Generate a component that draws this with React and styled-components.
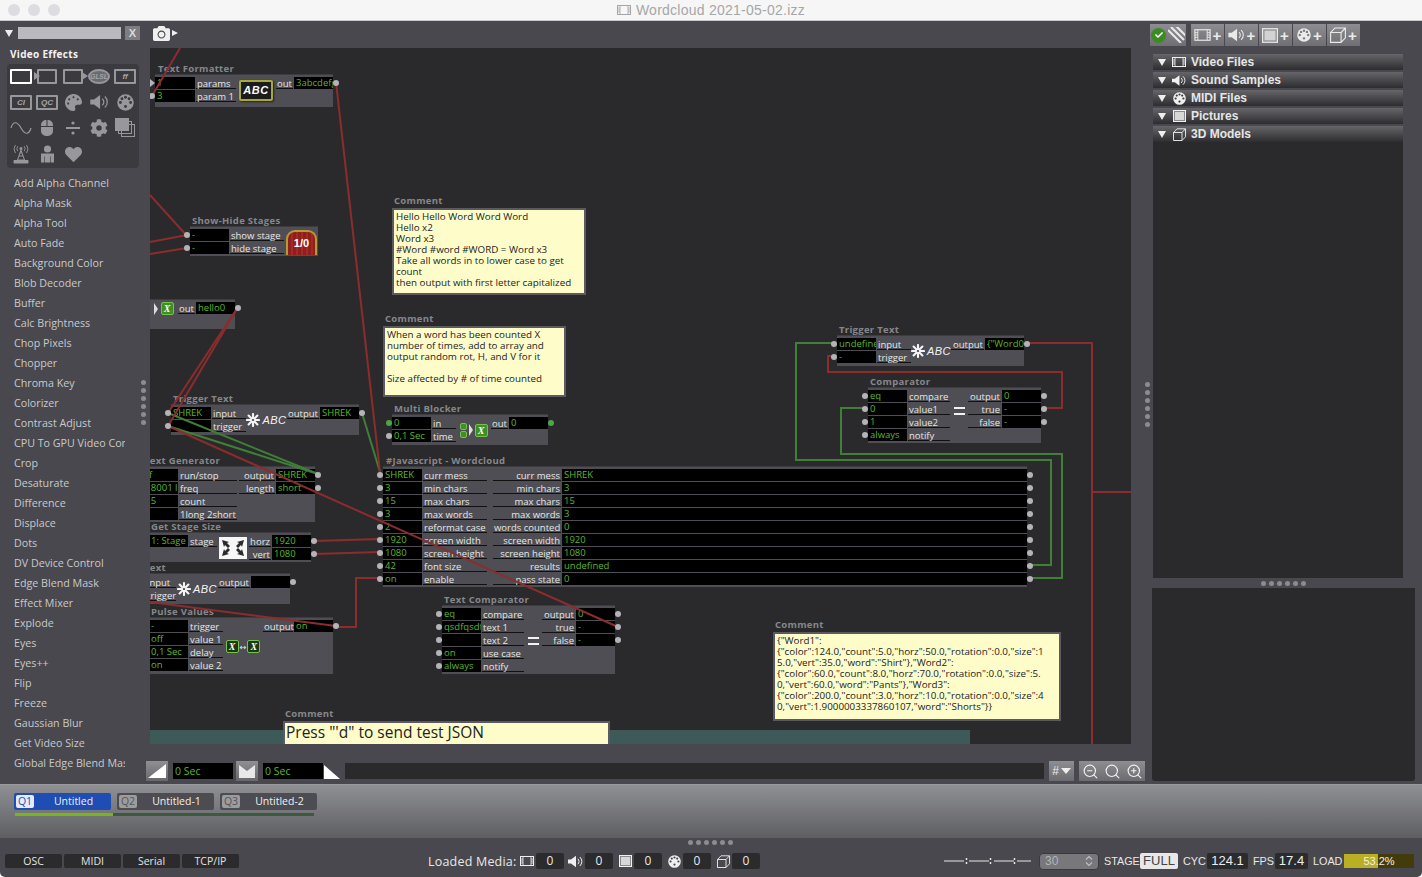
import React from 'react';
import styled, { createGlobalStyle } from 'styled-components';
import { FaPalette, FaMouse, FaCog, FaHeart, FaCamera, FaCheck } from 'react-icons/fa';
import { ZoomIn, ZoomOut, Search } from 'lucide-react';

const UI = '"Open Sans", "DejaVu Sans", sans-serif';

const Global = createGlobalStyle`
  html, body { margin: 0; padding: 0; background: #fff; }
  body { font-family: ${UI}; overflow: hidden; }
  * { box-sizing: border-box; }
`;

const Root = styled.div`
  position: relative;
  width: 1422px;
  height: 877px;
  display: flex;
  flex-direction: column;
  background: #48484e;
  border-radius: 0 0 5px 5px;
  overflow: hidden;
`;

/* ---------- title bar ---------- */
const TitleBar = styled.div`
  position: relative;
  height: 21px;
  flex: none;
  display: flex;
  align-items: center;
  justify-content: center;
  gap: 5px;
  background: #f6f6f6;
  border-bottom: 1px solid #c9c9cc;
  color: #a6a6a8;
  font: 14px "Liberation Sans", sans-serif;
  letter-spacing: 0.25px;
`;
const Lights = styled.div`
  position: absolute;
  left: 8px;
  top: 4px;
  display: flex;
  gap: 8px;
`;
const Light = styled.span`
  width: 12px;
  height: 12px;
  border-radius: 50%;
  background: #dcdce1;
`;

/* ---------- icons ---------- */
const FilmIcon = ({ w = 14, h = 12 }) => (
  <svg width={w} height={h} viewBox="0 0 14 12" fill="none" stroke="currentColor">
    <rect x="0.5" y="1.5" width="13" height="9" />
    <path d="M3 1.5v9M11 1.5v9M.5 4h2.5M.5 6h2.5M.5 8h2.5M11 4h2.5M11 6h2.5M11 8h2.5" strokeWidth="0.8" />
  </svg>
);
const SpeakerIcon = ({ w = 15, h = 13 }) => (
  <svg width={w} height={h} viewBox="0 0 15 13" fill="none" stroke="currentColor">
    <path d="M0 4.5h3L8 .8v11.4L3 8.5H0z" fill="currentColor" stroke="none" />
    <path d="M9.8 3.8a3.6 3.6 0 0 1 0 5.4M11.8 2a6 6 0 0 1 0 9" />
  </svg>
);
const PictureIcon = ({ s = 13 }) => (
  <svg width={s} height={s - 1} viewBox="0 0 13 12">
    <rect x="0.5" y="0.5" width="12" height="11" fill="#8a8a8e" stroke="currentColor" />
    <rect x="2" y="2" width="9" height="8" fill="currentColor" opacity="0.75" />
  </svg>
);
const MidiIcon = ({ s = 13, hole = '#48484e' }) => (
  <svg width={s} height={s} viewBox="0 0 13 13">
    <circle cx="6.5" cy="6.5" r="6.3" fill="currentColor" />
    {[[2.6, 6.5], [3.8, 3.6], [6.5, 2.5], [9.2, 3.6], [10.4, 6.5], [6.5, 9.6]].map(([cx, cy]) => (
      <circle key={cx + '-' + cy} cx={cx} cy={cy} r="1.1" fill={hole} />
    ))}
  </svg>
);
const CubeIcon = ({ s = 13 }) => (
  <svg width={s} height={s} viewBox="0 0 13 13" fill="none" stroke="currentColor" strokeWidth="0.9">
    <path d="M.5 4.5h8.5v8H.5zM.5 4.5L4 .8h8.5L9 4.5M12.5.8v8L9 12.5" />
  </svg>
);
const SparkIcon = () => (
  <svg width="14" height="14" viewBox="-7 -7 14 14" stroke="#f4f4f4" strokeWidth="2.1" strokeLinecap="round">
    <path d="M0-2V-6M0 2V6M-2 0H-6M2 0H6M-1.5-1.5L-4.4-4.4M1.5 1.5L4.4 4.4M-1.5 1.5L-4.4 4.4M1.5-1.5L4.4-4.4" />
  </svg>
);
const TowerIcon = () => (
  <svg width="18" height="19" viewBox="0 0 18 19" fill="none" stroke="currentColor">
    <path d="M9 5L5.5 15h7zM6.8 11h4.4M7.8 8h2.4" />
    <path d="M2 18h14v-2.5H2z" fill="currentColor" />
    <circle cx="9" cy="3.5" r="1.5" fill="currentColor" stroke="none" />
    <path d="M5.8 1.2a4 4 0 0 0 0 5M12.2 1.2a4 4 0 0 1 0 5M3.4 0a7 7 0 0 0 0 8M14.6 0a7 7 0 0 1 0 8" strokeWidth="0.9" />
  </svg>
);

/* ---------- left column ---------- */
const Workspace = styled.div`
  position: relative;
  flex: 1;
  display: flex;
  min-height: 0;
`;
const Sidebar = styled.aside`
  width: 150px;
  flex: none;
  overflow: hidden;
`;
const SearchRow = styled.div`
  display: flex;
  align-items: center;
  height: 21px;
  padding: 3px 0 0 5px;
`;
const Disclosure = styled.span`
  width: 0;
  height: 0;
  border-left: 4px solid transparent;
  border-right: 4px solid transparent;
  border-top: 7px solid ${p => p.$color || '#eee'};
  flex: none;
`;
const SearchBox = styled.div`
  width: 103px;
  height: 12px;
  margin-left: 5px;
  background: #b9b9bf;
`;
const ClearButton = styled.div`
  width: 15px;
  height: 14px;
  margin-left: 4px;
  background: #7d7d82;
  color: #d9d9dc;
  font: bold 11px/14px "Liberation Sans", sans-serif;
  text-align: center;
`;
const SectionTitle = styled.div`
  margin: 5px 0 0 10px;
  height: 14px;
  color: #f2f2f2;
  font: bold 10px/14px ${UI};
  letter-spacing: 0.3px;
`;
const Palette = styled.div`
  width: 132px;
  height: 104px;
  margin: 3px 0 0 7px;
  padding: 2px 1px 0;
  display: grid;
  grid-template-columns: repeat(5, 26px);
  grid-auto-rows: 26px;
  justify-items: center;
  align-items: start;
  background: #3a3a3f;
  border-radius: 4px;
  color: #98989c;
`;
const PaletteCell = styled.div`
  height: 20px;
  display: flex;
  align-items: center;
  justify-content: center;
`;
const FrameGlyph = styled.div`
  position: relative;
  width: ${p => (p.$wide ? 22 : 20)}px;
  height: 15px;
  border: 2px solid ${p => (p.$active ? '#fff' : '#98989c')};
  border-radius: ${p => (p.$oval ? '50%' : '1px')};
  background: ${p => (p.$oval ? '#6c6c70' : 'transparent')};
  color: #a5a5a9;
  font: italic bold ${p => (p.$oval ? 6.5 : 8)}px/11px "Liberation Sans", sans-serif;
  text-align: center;
  white-space: nowrap;
`;
const FrameArrow = styled.span`
  position: absolute;
  top: 1px;
  ${p => (p.$right ? 'right: -7px;' : 'left: -5px;')}
  width: 0;
  height: 0;
  border-top: 4px solid transparent;
  border-bottom: 4px solid transparent;
  border-left: 6px solid #98989c;
`;
const EffectList = styled.ul`
  list-style: none;
  margin: 5px 0 0;
  padding: 0;
  width: 125px;
  overflow: hidden;
`;
const EffectItem = styled.li`
  height: 20px;
  padding-left: 14px;
  color: #c8c8ca;
  font-size: 10.7px;
  line-height: 20px;
  white-space: nowrap;
  overflow: hidden;
`;

/* ---------- center column ---------- */
const Center = styled.main`
  width: 981px;
  flex: none;
  display: flex;
  flex-direction: column;
`;
const CanvasBar = styled.div`
  height: 27px;
  display: flex;
  align-items: center;
  gap: 2px;
  padding: 0 0 3px 3px;
  color: #f0f0f0;
`;
const SmallArrow = styled.span`
  width: 0;
  height: 0;
  border-top: 3px solid transparent;
  border-bottom: 3px solid transparent;
  border-left: 6px solid #eee;
`;
const SmallDown = styled.span`
  width: 0;
  height: 0;
  border-left: 5px solid transparent;
  border-right: 5px solid transparent;
  border-top: 6px solid #eee;
`;
const Canvas = styled.section`
  position: relative;
  height: 696px;
  background: #2a2a2d;
  overflow: hidden;
`;
const ScrubStrip = styled.div`
  position: absolute;
  left: 0;
  bottom: 0;
  width: 820px;
  height: 14px;
  background: #3d5a59;
`;
const Wires = styled.svg`
  position: absolute;
  inset: 0;
  z-index: 2;
  pointer-events: none;
`;

const NodeFrame = styled.div`
  position: absolute;
  left: ${p => p.$x - 150}px;
  top: ${p => p.$y - 60}px;
`;
const NodeTitle = styled.div`
  height: ${p => p.$h || 12}px;
  padding-left: ${p => p.$indent}px;
  color: #87878b;
  font: bold 9.5px/12px ${UI};
  letter-spacing: 0.3px;
  white-space: nowrap;
`;
const NodeBody = styled.div`
  display: grid;
  grid-template-columns: ${p => p.$cols.map(c => c + 'px').join(' ')};
  grid-auto-rows: 13px;
  padding: 2px 0 ${p => p.$pad}px;
  background: #4e4e54;
  border-top: 1px solid #3c3c41;
  margin-top: -1px;
`;
const FieldCell = styled.div`
  position: relative;
  grid-column: ${p => p.$col};
  grid-row: ${p => p.$row};
  height: 12px;
`;
const FieldText = styled.div`
  height: 12px;
  padding-left: 2px;
  background: #000;
  color: #5db52c;
  font-size: 9.5px;
  line-height: 11px;
  white-space: nowrap;
  overflow: hidden;
`;
const FieldLabel = styled.div`
  grid-column: ${p => p.$col};
  grid-row: ${p => p.$row};
  height: 12px;
  margin: 0 1px;
  padding: 0 1px;
  color: #e6e6e6;
  border-bottom: 1px solid #111;
  font-size: 9.5px;
  line-height: 14px;
  text-align: ${p => (p.$right ? 'right' : 'left')};
  white-space: nowrap;
  overflow: visible;
`;
const Port = styled.span`
  position: absolute;
  z-index: 3;
  top: 3px;
  ${p => (p.$side === 'out' ? 'right: -6px;' : 'left: -6px;')}
  width: 6px;
  height: 6px;
  border-radius: 50%;
  background: ${p => (p.$kind === 'on' ? '#49a845' : '#b4b4b8')};
`;
const ArrowPort = styled.span`
  position: absolute;
  z-index: 3;
  top: 2px;
  left: -5px;
  width: 0;
  height: 0;
  border-top: 4px solid transparent;
  border-bottom: 4px solid transparent;
  border-left: 5px solid #b4b4b8;
`;
const IconCell = styled.div`
  grid-column: 3;
  grid-row: 1 / span ${p => p.$span};
  display: flex;
  align-items: ${p => p.$align || 'center'};
  justify-content: center;
`;

const Node = ({ x, y, title, indent = 2, cols, inputs = [], outputs = [], pad = 1, rows, align, children }) => {
  const span = rows || Math.max(inputs.length, outputs.length);
  return (
    <NodeFrame $x={x} $y={y}>
      <NodeTitle $indent={indent}>{title}</NodeTitle>
      <NodeBody $cols={cols} $pad={pad}>
        {inputs.map(([value, label, kind], i) => (
          <React.Fragment key={label}>
            <FieldCell $col={1} $row={i + 1}>
              {kind === 'arrow' ? <ArrowPort /> : <Port $kind={kind} />}
              <FieldText>{value}</FieldText>
            </FieldCell>
            <FieldLabel $col={2} $row={i + 1}>{label}</FieldLabel>
          </React.Fragment>
        ))}
        <IconCell $span={span} $align={align}>{children}</IconCell>
        {outputs.map(([label, value, kind], i) => (
          <React.Fragment key={label}>
            <FieldLabel $col={4} $row={i + 1} $right>{label}</FieldLabel>
            <FieldCell $col={5} $row={i + 1}>
              <FieldText>{value}</FieldText>
              <Port $side="out" $kind={kind} />
            </FieldCell>
          </React.Fragment>
        ))}
      </NodeBody>
    </NodeFrame>
  );
};

const AbcPlate = styled.div`
  width: 34px;
  height: 21px;
  margin-top: 1px;
  background: #1c1c1c;
  border: 2px solid #a7a83a;
  border-radius: 2px;
  box-shadow: 1px 1px 2px #222;
  color: #fff;
  font: italic bold 11px/17px "Liberation Sans", sans-serif;
  letter-spacing: 0.5px;
  text-align: center;
`;
const StagePlate = styled.div`
  width: 31px;
  height: 25px;
  border: 2px solid #b39a34;
  border-bottom: 0;
  border-radius: 9px 9px 0 0;
  background: repeating-linear-gradient(90deg, #8e1f1c 0 3px, #a52a24 3px 5px);
  color: #fff;
  font: bold 11px/23px "Liberation Sans", sans-serif;
  text-align: center;
`;
const ActorX = styled.span`
  display: inline-block;
  flex: none;
  width: ${p => p.$size}px;
  height: ${p => p.$size}px;
  background: ${p => (p.$dark ? '#1c3a12' : '#3f8f22')};
  border: 1px solid #79c04e;
  border-radius: 2px;
  color: #fff;
  font: italic bold ${p => p.$size - 3}px/${p => p.$size - 2}px "Liberation Serif", serif;
  text-align: center;
`;
const XRow = styled.div`
  display: flex;
  align-items: center;
  gap: ${p => p.$gap || 2}px;
  color: #e8e8e8;
  font-size: 8px;
`;
const XStack = styled.div`
  display: flex;
  flex-direction: column;
  gap: 1px;
`;
const Wedge = styled.span`
  width: 0;
  height: 0;
  border-top: 6px solid transparent;
  border-bottom: 6px solid transparent;
  border-left: 4px solid #ddd;
`;
const TriggerMark = styled.div`
  display: flex;
  align-items: center;
  gap: 2px;
  color: #f4f4f4;
  font: italic 11px "Liberation Sans", sans-serif;
  letter-spacing: 0.5px;
`;
const EqualsMark = styled.div`
  width: 11px;
  height: 8px;
  margin-top: ${p => p.$top}px;
  border-top: 2px solid #f2f2f2;
  border-bottom: 2px solid #f2f2f2;
`;
const StageSizeIcon = () => (
  <svg width="28" height="22" viewBox="0 0 28 22">
    <rect width="28" height="22" fill="#f6f6f6" />
    <g fill="#2a2a2d">
      <path d="M3 3l7 2-2 1 3 3-2 2-3-3-1 2zM25 3l-7 2 2 1-3 3 2 2 3-3 1 2zM3 19l7-2-2-1 3-3-2-2-3 3-1-2zM25 19l-7-2 2-1-3-3 2-2 3 3 1-2z" />
    </g>
  </svg>
);

const CommentFrame = styled.div`
  position: absolute;
  z-index: 1;
  left: ${p => p.$x - 150}px;
  top: ${p => p.$y - 61}px;
  width: ${p => p.$w}px;
`;
const CommentBox = styled.div`
  height: ${p => p.$h}px;
  padding: ${p => (p.$large ? '0 1px' : '1px 2px 0')};
  background: #fefdca;
  border: 2px solid #5a5a60;
  border-bottom-width: ${p => (p.$large ? 0 : 2)}px;
  color: #222;
  font-size: ${p => (p.$large ? 15.5 : 9.8)}px;
  line-height: ${p => (p.$large ? '19px' : '11px')};
  white-space: pre;
  overflow: hidden;
`;
const Comment = ({ x, y, w, h, large, children }) => (
  <CommentFrame $x={x} $y={y} $w={w}>
    <NodeTitle $indent={2} $h={13}>Comment</NodeTitle>
    <CommentBox $h={h} $large={large}>{children}</CommentBox>
  </CommentFrame>
);

const Transport = styled.div`
  height: 40px;
  margin: 0 -14px 0 -4px;
  padding-top: 17px;
  display: flex;
  align-items: flex-start;
  gap: 5px;
`;
const FadeButton = styled.div`
  width: 22px;
  height: 20px;
  background: linear-gradient(#909094, #68686c);
  display: flex;
  align-items: center;
  justify-content: center;
`;
const TimeField = styled.div`
  width: 60px;
  height: 16px;
  margin: 2px -2px 0 0;
  padding-left: 2px;
  background: #000;
  color: #5db52c;
  font-size: 10.5px;
  line-height: 16px;
`;
const FadeOutMark = styled.svg`
  flex: none;
  margin: 2px 0 0 -2px;
`;
const Timeline = styled.div`
  flex: 1;
  height: 16px;
  margin-top: 2px;
  background: #2a2a2d;
`;
const GridButton = styled.div`
  width: 25px;
  height: 20px;
  display: flex;
  align-items: center;
  justify-content: center;
  gap: 2px;
  background: linear-gradient(#8e8e92, #6c6c70);
  color: #eee;
  font: 12px "Liberation Sans", sans-serif;
`;
const ZoomGroup = styled.div`
  width: 66px;
  height: 20px;
  display: flex;
  align-items: center;
  justify-content: space-around;
  background: linear-gradient(#8e8e92, #6c6c70);
  color: #f2f2f2;
`;

/* ---------- right column ---------- */
const MediaColumn = styled.aside`
  width: 291px;
  flex: none;
  padding: 3px 7px 3px 22px;
  display: flex;
  flex-direction: column;
`;
const MediaToolbar = styled.div`
  height: 22px;
  margin-left: -3px;
  display: flex;
  gap: 1px;
  flex: none;
`;
const MediaButton = styled.div`
  width: ${p => p.$w || 33}px;
  margin-right: ${p => p.$mr || 0}px;
  display: flex;
  align-items: center;
  justify-content: center;
  gap: 2px;
  background: linear-gradient(#8e8e92, #6f6f73);
  color: #eaeaea;
  font: bold 15px/1 "Liberation Sans", sans-serif;
`;
const CheckBadge = styled.span`
  width: 15px;
  height: 15px;
  border-radius: 50%;
  background: #3d8a24;
  color: #fff;
  display: flex;
  align-items: center;
  justify-content: center;
`;
const MediaPanel = styled.div`
  width: 250px;
  height: 524px;
  margin-top: 8px;
  display: flex;
  flex-direction: column;
  gap: 2px;
  flex: none;
`;
const MediaHeader = styled.div`
  height: 16px;
  flex: none;
  display: flex;
  align-items: center;
  padding-left: 5px;
  background: linear-gradient(#66666a, #2d2d30);
  color: #e6e6e6;
  font: bold 12px/16px "Liberation Sans", sans-serif;
`;
const HeaderIcon = styled.span`
  width: 14px;
  margin: 0 5px 0 6px;
  display: flex;
  justify-content: center;
  color: #f0f0f0;
`;
const MediaWell = styled.div`
  flex: 1;
  background: #2a2a2d;
  margin-top: -2px;
`;
const PreviewWell = styled.div`
  width: 263px;
  height: 193px;
  margin: 10px 0 0 -1px;
  flex: none;
  background: #2a2a2d;
  border-radius: 0 0 3px 3px;
`;

const Dots = styled.div`
  position: absolute;
  z-index: 4;
  display: flex;
  flex-direction: ${p => (p.$vertical ? 'column' : 'row')};
  gap: 3px;
  left: ${p => p.$x}px;
  top: ${p => p.$y}px;
  span {
    width: 5px;
    height: 5px;
    border-radius: 50%;
    background: #8b8b90;
  }
`;
const Grip = ({ x, y, vertical }) => (
  <Dots $x={x} $y={y} $vertical={vertical}>
    {[0, 1, 2, 3, 4, 5].map(i => <span key={i} />)}
  </Dots>
);

/* ---------- cue bar ---------- */
const CueBar = styled.div`
  height: 54px;
  flex: none;
  padding: 8px 0 0 14px;
  background: linear-gradient(#8f9094, #5d5d62);
  border-top: 1px solid #9a9a9e;
`;
const CueTabs = styled.div`
  display: flex;
  gap: 6px;
`;
const CueTab = styled.div`
  position: relative;
  width: 97px;
  height: 17px;
  padding-left: 22px;
  border-radius: 2px;
  background: ${p => (p.$active ? '#1e4db4' : '#4c4c52')};
  color: #f0f0f0;
  font-size: 10.5px;
  line-height: 16px;
  text-align: center;
`;
const CueBadge = styled.span`
  position: absolute;
  left: 2px;
  top: 2px;
  width: 18px;
  height: 13px;
  border-radius: 2px;
  background: ${p => (p.$active ? '#e6ebf6' : '#9c9c9f')};
  color: ${p => (p.$active ? '#1e4db4' : '#555')};
  font-size: 10.5px;
  line-height: 13px;
  text-align: center;
`;
const CueProgress = styled.div`
  width: 299px;
  height: 3px;
  margin: 3px 0 0 1px;
  background: #3b5a3e;
`;
const CueFill = styled.div`
  width: 98px;
  height: 3px;
  background: #74b816;
`;

/* ---------- status bar ---------- */
const StatusBar = styled.footer`
  height: 39px;
  flex: none;
  padding: 15px 0 0 5px;
  display: flex;
  align-items: flex-start;
  color: #e8e8e8;
  font-size: 11px;
`;
const ConnectionButtons = styled.div`
  display: flex;
  gap: 2px;
  margin-top: 1px;
`;
const ConnectionButton = styled.div`
  width: 57px;
  height: 14px;
  border-radius: 2px;
  background: #2b2b2e;
  color: #e4e4e4;
  font-size: 10.5px;
  line-height: 14px;
  text-align: center;
`;
const LoadedMedia = styled.div`
  margin-left: 189px;
  height: 16px;
  display: flex;
  align-items: center;
  font-size: 12.5px;
`;
const LoadedLabel = styled.span`
  width: 88px;
  white-space: nowrap;
  letter-spacing: 0.2px;
`;
const LoadedIcon = styled.span`
  display: flex;
  width: ${p => p.$w}px;
  margin-left: ${p => p.$ml}px;
  color: #f0f0f0;
`;
const Count = styled.div`
  width: 28px;
  height: 16px;
  border-radius: 2px;
  background: #2b2b2e;
  font-size: 12px;
  line-height: 16px;
  text-align: center;
`;
const RightStatus = styled.div`
  margin-left: 184px;
  height: 16px;
  display: flex;
  align-items: center;
  font-family: "Liberation Sans", sans-serif;
  font-size: 11px;
`;
const Stepper = styled.div`
  width: 60px;
  height: 17px;
  margin: 0 5px 0 8px;
  padding: 0 5px;
  display: flex;
  align-items: center;
  justify-content: space-between;
  border-radius: 4px;
  border: 1px solid #3a3a3e;
  background: #77777c;
  color: #b4b4b7;
  font-size: 12px;
`;
const StatLabel = styled.span`
  width: ${p => p.$w}px;
  white-space: nowrap;
  font-size: 10.8px;
`;
const StatValue = styled.div`
  width: ${p => p.$w}px;
  height: 16px;
  margin: 0 5px 0 2px;
  border-radius: 2px;
  background: ${p => (p.$light ? '#e8e8e8' : '#2b2b2e')};
  color: ${p => (p.$light ? '#444' : '#eee')};
  font-size: 13px;
  line-height: 16px;
  text-align: center;
`;
const LoadMeter = styled.div`
  position: relative;
  width: 70px;
  height: 14px;
  margin-left: 2px;
  background: #423c0d;
  color: #f2f2e0;
  font-size: 11px;
  line-height: 14px;
  text-align: center;
`;
const LoadFill = styled.div`
  position: absolute;
  inset: 0 auto 0 0;
  background: #b9ae24;
`;
const LoadText = styled.span`
  position: relative;
`;

/* ---------- data ---------- */
const effects = [
  'Add Alpha Channel', 'Alpha Mask', 'Alpha Tool', 'Auto Fade', 'Background Color', 'Blob Decoder', 'Buffer',
  'Calc Brightness', 'Chop Pixels', 'Chopper', 'Chroma Key', 'Colorizer', 'Contrast Adjust', 'CPU To GPU Video Con',
  'Crop', 'Desaturate', 'Difference', 'Displace', 'Dots', 'DV Device Control', 'Edge Blend Mask', 'Effect Mixer',
  'Explode', 'Eyes', 'Eyes++', 'Flip', 'Freeze', 'Gaussian Blur', 'Get Video Size', 'Global Edge Blend Mask',
];

const redWires = [
  'M180 48L152 96', 'M336 82L380 472', 'M150 195L187 236', 'M150 242L187 235', 'M150 254L187 248',
  'M238 307L168 413', 'M238 307L168 426', 'M168 426L618 627', 'M150 602L336 626',
  'M314 541L380 539', 'M314 554L380 552', 'M336 627H356V578H380',
  'M1027 343H1092V744', 'M1092 492H1131', 'M1044 408H1062V372H828V356H834',
];
const greenWires = [
  'M834 343H796V460H1051V565H1027', 'M865 408H841V454H1062V578H1027',
  'M168 413L318 474', 'M168 426L318 474', 'M362 413L380 472',
];

const media = [
  ['Video Files', <FilmIcon key="f" />], ['Sound Samples', <SpeakerIcon key="s" />], ['MIDI Files', <MidiIcon key="m" hole="#3c3c40" />],
  ['Pictures', <PictureIcon key="p" />], ['3D Models', <CubeIcon key="c" />],
];

const App = () => (
  <Root>
    <Global />
    <TitleBar>
      <Lights><Light /><Light /><Light /></Lights>
      <FilmIcon />
      Wordcloud 2021-05-02.izz
    </TitleBar>

    <Workspace>
      <Sidebar>
        <SearchRow>
          <Disclosure />
          <SearchBox />
          <ClearButton>X</ClearButton>
        </SearchRow>
        <SectionTitle>Video Effects</SectionTitle>
        <Palette>
          <PaletteCell><FrameGlyph $wide $active /></PaletteCell>
          <PaletteCell><FrameGlyph><FrameArrow /></FrameGlyph></PaletteCell>
          <PaletteCell><FrameGlyph><FrameArrow $right /></FrameGlyph></PaletteCell>
          <PaletteCell><FrameGlyph $wide $oval>GLSL</FrameGlyph></PaletteCell>
          <PaletteCell><FrameGlyph $wide>ff</FrameGlyph></PaletteCell>
          <PaletteCell><FrameGlyph $wide>CI</FrameGlyph></PaletteCell>
          <PaletteCell><FrameGlyph $wide>QC</FrameGlyph></PaletteCell>
          <PaletteCell><FaPalette size={17} /></PaletteCell>
          <PaletteCell><SpeakerIcon w={19} h={16} /></PaletteCell>
          <PaletteCell><MidiIcon s={17} hole="#3a3a3f" /></PaletteCell>
          <PaletteCell>
            <svg width="22" height="16" viewBox="0 0 22 16" fill="none" stroke="currentColor" strokeWidth="1.2">
              <path d="M1 8C3 1 7 1 11 8s8 7 10 0" />
            </svg>
          </PaletteCell>
          <PaletteCell><FaMouse size={16} /></PaletteCell>
          <PaletteCell>
            <svg width="14" height="14" viewBox="0 0 14 14" fill="currentColor">
              <circle cx="7" cy="2" r="1.6" /><rect y="6" width="14" height="2" /><circle cx="7" cy="12" r="1.6" />
            </svg>
          </PaletteCell>
          <PaletteCell><FaCog size={18} /></PaletteCell>
          <PaletteCell>
            <svg width="20" height="20" viewBox="0 0 20 20" fill="none" stroke="currentColor">
              <rect x="6.5" y="6.5" width="13" height="12" />
              <rect x="3.5" y="3.5" width="13" height="12" />
              <rect x="0.5" y="0.5" width="13" height="12" fill="currentColor" />
            </svg>
          </PaletteCell>
          <PaletteCell><TowerIcon /></PaletteCell>
          <PaletteCell>
            <svg width="15" height="18" viewBox="0 0 15 18" fill="currentColor">
              <circle cx="7.5" cy="4" r="3.6" /><path d="M1 8.5h13v9h-3v-6h-.6v6H4.6v-6H4v6H1z" />
            </svg>
          </PaletteCell>
          <PaletteCell><FaHeart size={17} /></PaletteCell>
        </Palette>
        <EffectList>
          {effects.map(name => <EffectItem key={name}>{name}</EffectItem>)}
        </EffectList>
      </Sidebar>

      <Center>
        <CanvasBar>
          <FaCamera size={17} />
          <SmallArrow />
        </CanvasBar>
        <Canvas>
          <ScrubStrip />

          <Node x={155} y={75} title="Text Formatter" indent={3} cols={[40, 42, 38, 19, 39]}
            inputs={[['1', 'params', 'arrow'], ['3', 'param 1']]} outputs={[['out', '3abcdefg']]} rows={2} pad={4}>
            <AbcPlate>ABC</AbcPlate>
          </Node>

          <Node x={190} y={227} title="Show-Hide Stages" cols={[39, 56, 33, 0, 0]}
            inputs={[['-', 'show stage'], ['-', 'hide stage']]} pad={1}>
            <StagePlate>1/0</StagePlate>
          </Node>

          <Node x={150} y={300} title="" cols={[0, 0, 27, 19, 39]} outputs={[['out', 'hello0']]} rows={2} pad={1} align="flex-start">
            <XRow $gap={3}><Wedge /><ActorX $size={13}>X</ActorX></XRow>
          </Node>

          <Node x={171} y={405} title="Trigger Text" cols={[40, 36, 39, 34, 39]}
            inputs={[['SHREK', 'input'], ['', 'trigger']]} outputs={[['output', 'SHREK']]} rows={2} pad={2}>
            <TriggerMark><SparkIcon />ABC</TriggerMark>
          </Node>

          <Node x={392} y={415} title="Multi Blocker" cols={[39, 26, 33, 19, 39]}
            inputs={[['0', 'in', 'on'], ['0,1 Sec', 'time']]} outputs={[['out', '0', 'on']]} rows={2} pad={2}>
            <XRow>
              <XStack><ActorX $size={7} /><ActorX $size={7} /></XStack>
              <Wedge />
              <ActorX $size={13}>X</ActorX>
            </XRow>
          </Node>

          <Node x={138} y={467} title="Text Generator" indent={6} cols={[40, 60, 0, 38, 39]}
            inputs={[['off', 'run/stop'], ['018001 l', 'freq'], ['015', 'count'], ['', '1long 2short']]}
            outputs={[['output', 'SHREK'], ['length', 'short']]} />

          <Node x={149} y={533} title="Get Stage Size" cols={[39, 30, 30, 24, 39]}
            inputs={[['1: Stage', 'stage']]} outputs={[['horz', '1920'], ['vert', '1080']]} rows={2} pad={1}>
            <StageSizeIcon />
          </Node>

          <Node x={105} y={574} title="Text" indent={39} cols={[40, 32, 40, 34, 39]}
            inputs={[['', 'input'], ['', 'trigger']]} outputs={[['output', '']]} rows={2} pad={2}>
            <TriggerMark><SparkIcon />ABC</TriggerMark>
          </Node>

          <Node x={149} y={618} title="Pulse Values" cols={[39, 36, 38, 32, 39]}
            inputs={[['-', 'trigger'], ['off', 'value 1'], ['0,1 Sec', 'delay'], ['on', 'value 2']]}
            outputs={[['output', 'on']]} pad={2}>
            <XRow $gap={1}><ActorX $size={13} $dark>X</ActorX>↔<ActorX $size={13} $dark>X</ActorX></XRow>
          </Node>

          <Node x={383} y={467} title="#Javascript - Wordcloud" indent={3} cols={[39, 66, 4, 70, 465]}
            inputs={[
              ['SHREK', 'curr mess'], ['3', 'min chars'], ['15', 'max chars'], ['3', 'max words'], ['2', 'reformat case'],
              ['1920', 'screen width'], ['1080', 'screen height'], ['42', 'font size'], ['on', 'enable'],
            ]}
            outputs={[
              ['curr mess', 'SHREK'], ['min chars', '3'], ['max chars', '15'], ['max words', '3'], ['words counted', '0'],
              ['screen width', '1920'], ['screen height', '1080'], ['results', 'undefined'], ['pass state', '0'],
            ]} />

          <Node x={442} y={606} title="Text Comparator" cols={[39, 44, 16, 35, 39]}
            inputs={[['eq', 'compare'], ['qsdfqsdf', 'text 1'], ['', 'text 2'], ['on', 'use case'], ['always', 'notify']]}
            outputs={[['output', '0'], ['true', '-'], ['false', '-']]} align="flex-start">
            <EqualsMark $top={29} />
          </Node>

          <Node x={837} y={336} title="Trigger Text" cols={[39, 36, 38, 35, 39]}
            inputs={[['undefined', 'input'], ['-', 'trigger']]} outputs={[['output', '{"Word0"']]} rows={2} pad={2}>
            <TriggerMark><SparkIcon />ABC</TriggerMark>
          </Node>

          <Node x={868} y={388} title="Comparator" cols={[39, 44, 16, 35, 39]}
            inputs={[['eq', 'compare'], ['0', 'value1'], ['1', 'value2'], ['always', 'notify']]}
            outputs={[['output', '0'], ['true', '-'], ['false', '-']]} align="flex-start">
            <EqualsMark $top={17} />
          </Node>

          <Comment x={392} y={208} w={194} h={87}>{`Hello Hello Word Word Word
Hello x2
Word x3
#Word #word #WORD = Word x3
Take all words in to lower case to get
count
then output with first letter capitalized`}</Comment>
          <Comment x={383} y={326} w={183} h={71}>{`When a word has been counted X
number of times, add to array and
output random rot, H, and V for it

Size affected by # of time counted`}</Comment>
          <Comment x={283} y={721} w={327} h={23} large>{`Press "'d" to send test JSON`}</Comment>
          <Comment x={773} y={632} w={288} h={89}>{`{"Word1":
{"color":124.0,"count":5.0,"horz":50.0,"rotation":0.0,"size":1
5.0,"vert":35.0,"word":"Shirt"},"Word2":
{"color":60.0,"count":8.0,"horz":70.0,"rotation":0.0,"size":5.
0,"vert":60.0,"word":"Pants"},"Word3":
{"color":200.0,"count":3.0,"horz":10.0,"rotation":0.0,"size":4
0,"vert":1.9000003337860107,"word":"Shorts"}}`}</Comment>

          <Wires width="981" height="696" viewBox="150 48 981 696" fill="none" strokeWidth="2">
            {greenWires.map(d => <path key={d} d={d} stroke="#3f7f37" />)}
            {redWires.map(d => <path key={d} d={d} stroke="#8c2c2c" />)}
          </Wires>
        </Canvas>
        <Transport>
          <FadeButton>
            <svg width="18" height="14" viewBox="0 0 18 14"><path d="M0 14L18 0v14z" fill="#fff" /></svg>
          </FadeButton>
          <TimeField>0 Sec</TimeField>
          <FadeButton>
            <svg width="16" height="14" viewBox="0 0 16 14"><path d="M0 1l8 6 8-6v13H0z" fill="#e8e8e8" /></svg>
          </FadeButton>
          <TimeField>0 Sec</TimeField>
          <FadeOutMark width="16" height="16" viewBox="0 0 16 16">
            <path d="M0 2l16 14H0z" fill="#fff" />
          </FadeOutMark>
          <Timeline />
          <GridButton># <SmallDown /></GridButton>
          <ZoomGroup>
            <ZoomOut size={17} strokeWidth={1.6} />
            <Search size={17} strokeWidth={1.6} />
            <ZoomIn size={17} strokeWidth={1.6} />
          </ZoomGroup>
        </Transport>
      </Center>

      <MediaColumn>
        <MediaToolbar>
          <MediaButton $w={36} $mr={4}>
            <CheckBadge><FaCheck size={8} /></CheckBadge>
            <svg width="17" height="16" viewBox="0 0 17 16" stroke="#e8e8e8" strokeWidth="2.2">
              <path d="M3 0l13 13M0 3l13 13M6-3l13 13" />
            </svg>
          </MediaButton>
          <MediaButton><FilmIcon w={17} h={14} />+</MediaButton>
          <MediaButton><SpeakerIcon w={17} h={14} />+</MediaButton>
          <MediaButton><PictureIcon s={16} />+</MediaButton>
          <MediaButton><MidiIcon s={14} hole="#7d7d81" />+</MediaButton>
          <MediaButton><CubeIcon s={16} />+</MediaButton>
        </MediaToolbar>
        <MediaPanel>
          {media.map(([name, icon]) => (
            <MediaHeader key={name}>
              <Disclosure />
              <HeaderIcon>{icon}</HeaderIcon>
              {name}
            </MediaHeader>
          ))}
          <MediaWell />
        </MediaPanel>
        <PreviewWell />
      </MediaColumn>

      <Grip x={141} y={359} vertical />
      <Grip x={1145} y={361} vertical />
      <Grip x={1261} y={560} />
    </Workspace>

    <CueBar>
      <CueTabs>
        <CueTab $active><CueBadge $active>Q1</CueBadge>Untitled</CueTab>
        <CueTab><CueBadge>Q2</CueBadge>Untitled-1</CueTab>
        <CueTab><CueBadge>Q3</CueBadge>Untitled-2</CueTab>
      </CueTabs>
      <CueProgress><CueFill /></CueProgress>
    </CueBar>

    <StatusBar>
      <Grip x={688} y={840} />
      <ConnectionButtons>
        <ConnectionButton>OSC</ConnectionButton>
        <ConnectionButton>MIDI</ConnectionButton>
        <ConnectionButton>Serial</ConnectionButton>
        <ConnectionButton>TCP/IP</ConnectionButton>
      </ConnectionButtons>
      <LoadedMedia>
        <LoadedLabel>Loaded Media:</LoadedLabel>
        <LoadedIcon $w={16} $ml={4}><FilmIcon /></LoadedIcon>
        <Count>0</Count>
        <LoadedIcon $w={17} $ml={4}><SpeakerIcon /></LoadedIcon>
        <Count>0</Count>
        <LoadedIcon $w={15} $ml={6}><PictureIcon /></LoadedIcon>
        <Count>0</Count>
        <LoadedIcon $w={15} $ml={6}><MidiIcon /></LoadedIcon>
        <Count>0</Count>
        <LoadedIcon $w={15} $ml={6}><CubeIcon /></LoadedIcon>
        <Count>0</Count>
      </LoadedMedia>
      <RightStatus>
        <svg width="87" height="8" viewBox="0 0 87 8" fill="none" stroke="#e8e8e8">
          <path d="M0 4h20M25 4h20M50 4h20M73 4h14" />
          <path d="M22.5 1v2M22.5 5v2M46.5 1v2M46.5 5v2M70.5 1v2M70.5 5v2" strokeWidth="1.5" />
        </svg>
        <Stepper>
          30
          <svg width="8" height="12" viewBox="0 0 8 12" fill="none" stroke="#c0c0c3" strokeWidth="1.2">
            <path d="M1 4.5L4 1.5l3 3M1 7.5l3 3 3-3" />
          </svg>
        </Stepper>
        <StatLabel $w={34}>STAGE</StatLabel>
        <StatValue $w={38} $light>FULL</StatValue>
        <StatLabel $w={22}>CYC</StatLabel>
        <StatValue $w={41}>124.1</StatValue>
        <StatLabel $w={20}>FPS</StatLabel>
        <StatValue $w={33}>17.4</StatValue>
        <StatLabel $w={29}>LOAD</StatLabel>
        <LoadMeter>
          <LoadFill style={{ width: '48%' }} />
          <LoadText>53.2%</LoadText>
        </LoadMeter>
      </RightStatus>
    </StatusBar>
  </Root>
);

export default App;
